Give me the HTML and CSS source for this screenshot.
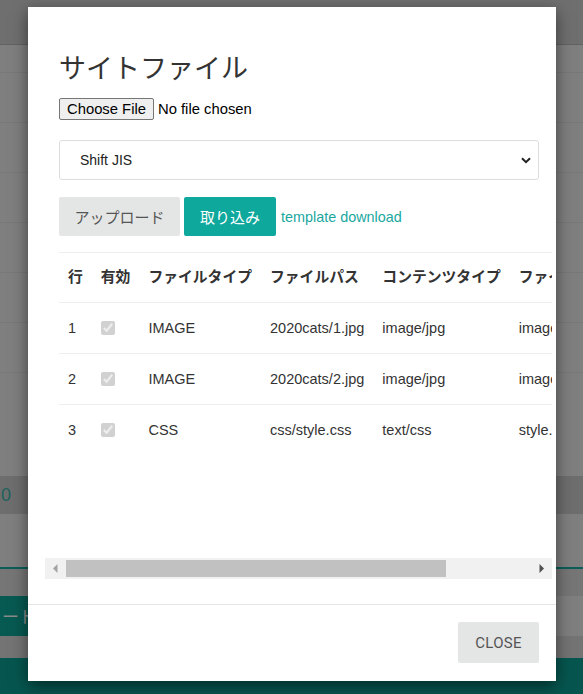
FILE: index.html
```html
<!DOCTYPE html>
<html lang="ja">
<head>
<meta charset="utf-8">
<title>サイトファイル</title>
<link rel="stylesheet" href="styles.css">
</head>
<body>
<div class="page">
  <div class="topbar"></div>
  <div class="bg-row first"></div>
  <div class="bg-row"></div>
  <div class="bg-row"></div>
  <div class="bg-row"></div>
  <div class="bg-row"></div>
  <div class="bg-row"></div>
  <div class="bg-row"></div>
  <div class="bg-gap"></div>
  <div class="bg-total">0</div>
  <div class="bg-space"></div>
  <div class="bg-teal-line"></div>
  <div class="bg-space2"></div>
  <div class="bg-teal-btn">ード</div>
  <div class="bg-space3"></div>
  <div class="bg-footer"></div>
</div>

<div class="modal">
  <div class="modal-body">
    <h2 class="title">サイトファイル</h2>
    <input class="file" type="file">
    <div class="select-wrap">
      <select class="select">
        <option>Shift JIS</option>
        <option>UTF-8</option>
      </select>
      <svg class="chev" width="10" height="7" viewBox="0 0 10 7"><path d="M1 1.2 L5 5.2 L9 1.2" fill="none" stroke="#222" stroke-width="2"/></svg>
    </div>
    <div class="actions">
      <button class="btn btn-gray">アップロード</button>
      <button class="btn btn-teal">取り込み</button>
      <a class="link" href="#">template download</a>
    </div>
    <div class="table-area">
      <div class="tscroll">
        <table class="table">
          <thead>
            <tr><th>行</th><th>有効</th><th>ファイルタイプ</th><th>ファイルパス</th><th>コンテンツタイプ</th><th>ファイル名</th><th>サイズ</th></tr>
          </thead>
          <tbody>
            <tr><td>1</td><td><input type="checkbox" checked disabled></td><td>IMAGE</td><td>2020cats/1.jpg</td><td>image/jpg</td><td>image1.jpg</td><td>10240</td></tr>
            <tr><td>2</td><td><input type="checkbox" checked disabled></td><td>IMAGE</td><td>2020cats/2.jpg</td><td>image/jpg</td><td>image2.jpg</td><td>10240</td></tr>
            <tr><td>3</td><td><input type="checkbox" checked disabled></td><td>CSS</td><td>css/style.css</td><td>text/css</td><td>style.css</td><td>2048</td></tr>
          </tbody>
        </table>
      </div>
      <div class="hbar">
        <span class="hbar-btn"><svg width="5" height="9" viewBox="0 0 5 9"><path d="M4.5 0 L0 4.5 L4.5 9 Z" fill="#a3a3a3"/></svg></span>
        <span class="hbar-thumb"></span>
        <span class="hbar-fill"></span>
        <span class="hbar-btn"><svg width="5" height="9" viewBox="0 0 5 9"><path d="M0.5 0 L5 4.5 L0.5 9 Z" fill="#505050"/></svg></span>
      </div>
    </div>
  </div>
  <div class="modal-footer">
    <button class="btn-close">CLOSE</button>
  </div>
</div>
</body>
</html>
```

FILE: styles.css
```css
* { box-sizing: border-box; }
html, body { margin: 0; height: 100%; }
body {
  background: #7f7f7f;
  font-family: "Liberation Sans", "Noto Sans CJK JP", sans-serif;
  color: #333;
  overflow: hidden;
  position: relative;
}

/* dimmed page behind the modal */
.topbar { height: 45px; background: #6f6f6f; border-bottom: 1px solid #626262; }
.bg-row { height: 50px; border-bottom: 1px solid #787878; }
.bg-row.first { height: 28px; }
.bg-gap { height: 103px; }
.bg-total { height: 38px; background: #6e6e6e; color: #1f625c; font-size: 18px; line-height: 38px; padding-left: 1px; }
.bg-space { height: 53px; }
.bg-teal-line { height: 2px; background: #0b5f58; }
.bg-space2 { height: 27px; background: #767676; }
.bg-teal-btn { height: 40px; width: 120px; background: #075a52; color: #8a8a8a; font-size: 17px; line-height: 40px; padding-left: 2px; font-family: "Noto Sans CJK JP", sans-serif; }
.bg-space3 { height: 22px; background: #747474; }
.bg-footer { height: 40px; background: #06564f; }

/* modal */
.modal {
  position: absolute;
  left: 28px;
  top: 7px;
  width: 528px;
  height: 674px;
  background: #fff;
  box-shadow: 0 5px 15px rgba(0, 0, 0, .5);
  display: flex;
  flex-direction: column;
}
.modal-body {
  flex: 1;
  padding: 43px 17px 0 31px;
  display: flex;
  flex-direction: column;
  align-items: flex-start;
}
.title {
  margin: 0;
  font-size: 27px;
  line-height: 34px;
  font-weight: 400;
  color: #333;
  font-family: "Noto Sans CJK JP", sans-serif;
}
.file {
  margin-top: 14px;
  font: 14.8px "Liberation Sans", sans-serif;
  color: #000;
  height: 22px;
}
.file::file-selector-button {
  font: inherit;
  height: 22px;
  padding: 0 7px;
  margin-right: 4px;
  border: 1px solid #767676;
  border-radius: 2px;
  background: #efefef;
  color: #000;
}
.select-wrap {
  margin-top: 20px;
  width: 480px;
  position: relative;
}
.select {
  display: block;
  width: 100%;
  height: 40px;
  appearance: none;
  -webkit-appearance: none;
  border: 1px solid #ddd;
  border-radius: 3px;
  padding: 0 20px;
  background: #fff;
  font: 14px "Liberation Sans", sans-serif;
  color: #222;
}
.chev { position: absolute; right: 8px; top: 17px; pointer-events: none; }

.actions {
  margin-top: 17px;
  display: flex;
  align-items: center;
  gap: 4px;
}
.btn {
  height: 39px;
  padding: 0;
  border: none;
  border-radius: 2px;
  font-family: "Liberation Sans", "Noto Sans CJK JP", sans-serif;
  font-size: 15px;
  text-align: center;
}
.btn-gray { width: 121px; background: #e4e5e5; color: #555; }
.btn-teal { width: 92px; background: #0ea89d; color: #fff; }
.link {
  margin-left: 1px;
  color: #1aa79f;
  text-decoration: none;
  font-size: 14.4px;
}

.table-area {
  margin-top: 16px;
  margin-left: -14px;
  width: 507px;
}
.tscroll {
  height: 306px;
  overflow: hidden;
  padding-left: 14px;
}
.table {
  border-collapse: collapse;
  white-space: nowrap;
  font-size: 14.5px;
  line-height: 20px;
  color: #333;
}
.table th {
  text-align: left;
  font-weight: 700;
  font-size: 14.8px;
  padding: 14px 9px 15px;
  border-top: 1px solid #eee;
}
.table td {
  padding: 15px 9px;
  border-top: 1px solid #eee;
}
.table input[type="checkbox"] {
  margin: 0;
  width: 14px;
  height: 14px;
  vertical-align: -2px;
}

.hbar {
  display: flex;
  align-items: center;
  height: 21px;
  background: #f1f1f1;
}
.hbar-btn {
  width: 21px;
  height: 21px;
  display: flex;
  align-items: center;
  justify-content: center;
}
.hbar-thumb { width: 380px; height: 17px; background: #c1c1c1; }
.hbar-fill { flex: 1; }

.modal-footer {
  height: 77px;
  border-top: 1px solid #e5e5e5;
  padding: 17px 17px 0 0;
  display: flex;
  justify-content: flex-end;
  align-items: flex-start;
}
.btn-close {
  width: 81px;
  height: 41px;
  border: none;
  border-radius: 2px;
  background: #e4e5e5;
  color: #555;
  font-family: Roboto, sans-serif;
  font-size: 15px;
  letter-spacing: 0.3px;
}
```
